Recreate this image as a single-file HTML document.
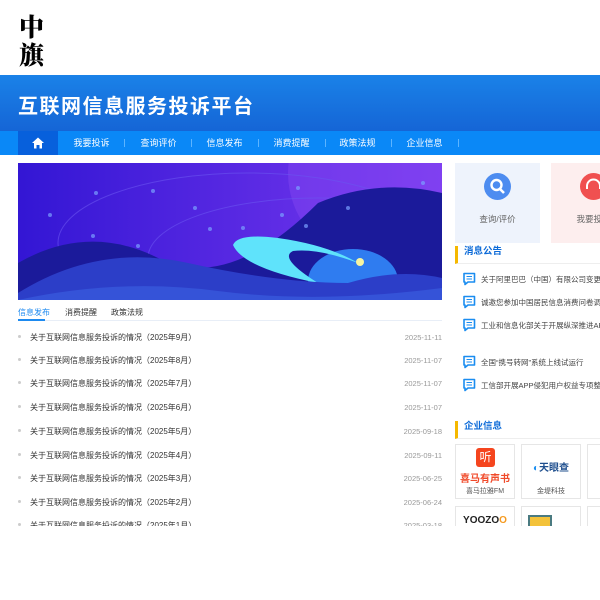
<!DOCTYPE html>
<html><head><meta charset="utf-8"><style>
*{margin:0;padding:0;box-sizing:border-box}
body{width:600px;height:600px;overflow:hidden;background:#fff;font-family:"Liberation Sans","Noto Sans CJK SC",sans-serif;position:relative}
.wrap{position:absolute;left:0;top:0;width:600px;height:526px;overflow:hidden}
.logo{position:absolute;left:19px;top:12px;font-family:"Noto Serif CJK SC",serif;font-weight:900;font-size:25px;line-height:28px;color:#000;width:30px}
.banner{position:absolute;left:0;top:75px;width:600px;height:56px;background:linear-gradient(180deg,#1a82e8,#1565d6)}
.banner h1{position:absolute;left:18px;top:15px;color:#fff;font-size:20px;letter-spacing:1.5px;font-weight:bold}
.nav{position:absolute;left:0;top:131px;width:600px;height:24px;background:#0a88f7}
.home{position:absolute;left:18px;top:0;width:40px;height:24px;background:#0760dc}
.nav span{position:absolute;top:5px;font-size:9px;color:#fff;width:67px;text-align:center}
.nav i{position:absolute;top:8px;width:1px;height:8px;background:#5cb4ff}
.hero{position:absolute;left:18px;top:163px;width:424px;height:137px;overflow:hidden;background:#3a1bd6}
.tabs{position:absolute;left:18px;top:306px;width:424px;height:15px;border-bottom:1px solid #e8eef7;font-size:8px;color:#333}
.tabs span{position:absolute;top:1px}
.row{position:absolute;left:18px;width:424px;font-size:8px;color:#333}
.row b{position:absolute;left:0;top:3px;width:3px;height:3px;border-radius:50%;background:#ccc}
.row em{font-style:normal;position:absolute;left:12px;top:0}
.row u{text-decoration:none;position:absolute;right:0;top:1px;color:#999;font-size:7.5px}
.card{position:absolute;top:163px;width:85px;height:80px}
.card .c{position:absolute;left:29px;top:10px;width:27px;height:27px;border-radius:50%}
.card p{position:absolute;top:50px;width:100%;text-align:center;font-size:8.5px;color:#666}
.hd{position:absolute;left:455px;width:160px;height:18px;border-bottom:1px solid #eee;border-left:3px solid #f5b800;font-size:9.5px;font-weight:bold;color:#0d6bd8;padding-left:6px;line-height:12px}
.msg{position:absolute;left:462px;font-size:7.5px;color:#444;white-space:nowrap}
.msg svg{position:absolute;left:0;top:-4px}
.msg span{position:absolute;left:19px;top:-2px}
.co{position:absolute;width:60px;height:55px;border:1px solid #e6e6e6;background:#fff}
.co p{position:absolute;top:41px;width:100%;text-align:center;font-size:7px;color:#555}
</style></head><body><div class="wrap">
<div class="logo">中<br>旗</div>
<div class="banner"><h1>互联网信息服务投诉平台</h1></div>
<div class="nav">
<div class="home"><svg width="40" height="24"><path d="M14 12 L20 6.5 L26 12 L24 12 L24 17.5 L21.5 17.5 L21.5 14 L18.5 14 L18.5 17.5 L16 17.5 L16 12Z" fill="#fff"/></svg></div>
<span style="left:58px">我要投诉</span><i style="left:124px"></i>
<span style="left:125px">查询评价</span><i style="left:191px"></i>
<span style="left:191px">信息发布</span><i style="left:258px"></i>
<span style="left:258px">消费提醒</span><i style="left:325px"></i>
<span style="left:324px">政策法规</span><i style="left:391px"></i>
<span style="left:391px">企业信息</span><i style="left:458px"></i>
</div>
<div class="hero"><svg width="424" height="137" viewBox="0 0 424 137">
<defs><linearGradient id="g" x1="0" y1="0" x2="1" y2="0"><stop offset="0" stop-color="#3316d4"/><stop offset="1" stop-color="#7a3af0"/></linearGradient></defs>
<rect width="424" height="137" fill="url(#g)"/>
<circle cx="360" cy="10" r="90" fill="#8a4cf2" opacity=".4"/>
<ellipse cx="230" cy="80" rx="190" ry="70" fill="none" stroke="#6b55f0" stroke-width="1" opacity=".6"/>
<ellipse cx="300" cy="95" rx="170" ry="60" fill="none" stroke="#6b55f0" stroke-width="1" opacity=".6"/>
<path d="M0 100 Q70 60 140 95 T300 40 Q360 15 424 30 L424 137 L0 137Z" fill="#1b1a9a"/>
<ellipse cx="335" cy="118" rx="45" ry="32" fill="#2f7cf0"/>
<path d="M215 82 Q220 70 260 75 Q310 82 340 100 Q300 85 275 88 Q260 95 300 120 Q225 105 215 82Z" fill="#5fe3fb"/>
<path d="M0 130 Q80 80 170 100 T330 120 Q380 105 424 115 L424 137 L0 137Z" fill="#2c3ec8"/>
<path d="M0 137 Q100 115 200 128 T424 125 L424 137Z" fill="#3553d8"/>
<circle cx="342" cy="99" r="4" fill="#f6f4a0"/>
<g fill="#7aa0ff" opacity=".7"><circle cx="78" cy="30" r="2"/><circle cx="135" cy="28" r="2"/><circle cx="32" cy="52" r="2"/><circle cx="177" cy="45" r="2"/><circle cx="192" cy="66" r="2"/><circle cx="225" cy="65" r="2"/><circle cx="264" cy="52" r="2"/><circle cx="288" cy="63" r="2"/><circle cx="330" cy="45" r="2"/><circle cx="120" cy="83" r="2"/><circle cx="75" cy="73" r="2"/><circle cx="280" cy="25" r="2"/><circle cx="405" cy="20" r="2"/></g>
</svg></div>
<div class="tabs"><span style="left:0;color:#1d8af0">信息发布</span><span style="left:47px">消费提醒</span><span style="left:93px">政策法规</span><div style="position:absolute;left:0;bottom:-1px;width:27px;height:2px;background:#1d8af0"></div></div>
<div class="row" style="top:332px"><b></b><em>关于互联网信息服务投诉的情况（2025年9月）</em><u>2025-11-11</u></div>
<div class="row" style="top:355px"><b></b><em>关于互联网信息服务投诉的情况（2025年8月）</em><u>2025-11-07</u></div>
<div class="row" style="top:378px"><b></b><em>关于互联网信息服务投诉的情况（2025年7月）</em><u>2025-11-07</u></div>
<div class="row" style="top:402px"><b></b><em>关于互联网信息服务投诉的情况（2025年6月）</em><u>2025-11-07</u></div>
<div class="row" style="top:426px"><b></b><em>关于互联网信息服务投诉的情况（2025年5月）</em><u>2025-09-18</u></div>
<div class="row" style="top:450px"><b></b><em>关于互联网信息服务投诉的情况（2025年4月）</em><u>2025-09-11</u></div>
<div class="row" style="top:473px"><b></b><em>关于互联网信息服务投诉的情况（2025年3月）</em><u>2025-06-25</u></div>
<div class="row" style="top:497px"><b></b><em>关于互联网信息服务投诉的情况（2025年2月）</em><u>2025-06-24</u></div>
<div class="row" style="top:520px"><b></b><em>关于互联网信息服务投诉的情况（2025年1月）</em><u>2025-03-18</u></div>
<div class="card" style="left:455px;background:#eef3fc"><div class="c" style="background:#4d8cf0"><svg width="27" height="27"><circle cx="12.5" cy="12" r="5" fill="none" stroke="#fff" stroke-width="2.4"/><path d="M16 16 L20 20" stroke="#fff" stroke-width="2.6"/></svg></div><p>查询/评价</p></div>
<div class="card" style="left:551px;background:#fdeeee"><div class="c" style="background:#f05050"><svg width="27" height="27"><path d="M7 16 V13 A6.5 6.5 0 0 1 20 13 V16" fill="none" stroke="#fff" stroke-width="2"/></svg></div><p>我要投诉</p></div>
<div class="hd" style="top:246px">消息公告</div>
<div class="msg" style="top:276px"><svg width="14" height="14"><path d="M2 1.5 H12.5 V10 H6 L3 12.5 V10 H2Z" fill="#fff" stroke="#1b8df0" stroke-width="1.6" stroke-linejoin="round"/><path d="M4.5 4.5 H10 M4.5 7 H10" stroke="#1b8df0" stroke-width="1"/></svg><span>关于阿里巴巴（中国）有限公司变更投诉</span></div>
<div class="msg" style="top:299px"><svg width="14" height="14"><path d="M2 1.5 H12.5 V10 H6 L3 12.5 V10 H2Z" fill="#fff" stroke="#1b8df0" stroke-width="1.6" stroke-linejoin="round"/><path d="M4.5 4.5 H10 M4.5 7 H10" stroke="#1b8df0" stroke-width="1"/></svg><span>诚邀您参加中国居民信息消费问卷调查</span></div>
<div class="msg" style="top:322px"><svg width="14" height="14"><path d="M2 1.5 H12.5 V10 H6 L3 12.5 V10 H2Z" fill="#fff" stroke="#1b8df0" stroke-width="1.6" stroke-linejoin="round"/><path d="M4.5 4.5 H10 M4.5 7 H10" stroke="#1b8df0" stroke-width="1"/></svg><span>工业和信息化部关于开展纵深推进APP侵</span></div>
<div class="msg" style="top:359px"><svg width="14" height="14"><path d="M2 1.5 H12.5 V10 H6 L3 12.5 V10 H2Z" fill="#fff" stroke="#1b8df0" stroke-width="1.6" stroke-linejoin="round"/><path d="M4.5 4.5 H10 M4.5 7 H10" stroke="#1b8df0" stroke-width="1"/></svg><span>全国“携号转网”系统上线试运行</span></div>
<div class="msg" style="top:382px"><svg width="14" height="14"><path d="M2 1.5 H12.5 V10 H6 L3 12.5 V10 H2Z" fill="#fff" stroke="#1b8df0" stroke-width="1.6" stroke-linejoin="round"/><path d="M4.5 4.5 H10 M4.5 7 H10" stroke="#1b8df0" stroke-width="1"/></svg><span>工信部开展APP侵犯用户权益专项整治行</span></div>
<div class="hd" style="top:421px">企业信息</div>
<div class="co" style="left:455px;top:444px"><div style="position:absolute;left:20px;top:3px;width:19px;height:19px;background:#f5451e;border-radius:3px;color:#fff;font-size:12px;text-align:center;line-height:19px">听</div><div style="position:absolute;top:25px;width:100%;text-align:center;color:#f04a2a;font-size:10px;font-weight:bold">喜马有声书</div><p>喜马拉雅FM</p></div>
<div class="co" style="left:521px;top:444px"><div style="position:absolute;top:14px;width:100%;text-align:center;color:#1f4f8e;font-size:10px;font-weight:bold"><span style="color:#1a8ef0">◐</span>天眼查</div><p>金堤科技</p></div>
<div class="co" style="left:587px;top:444px"></div>
<div class="co" style="left:455px;top:506px"><div style="position:absolute;top:8px;width:100%;text-align:center;font-size:10px;font-weight:bold;color:#222">YOOZO<span style="color:#f59a20">O</span></div></div>
<div class="co" style="left:521px;top:506px"><div style="position:absolute;left:6px;top:8px;width:24px;height:20px;background:#f3c23a;border:2px solid #4a7a80"></div></div>
<div class="co" style="left:587px;top:506px"></div>
</div></body></html>
